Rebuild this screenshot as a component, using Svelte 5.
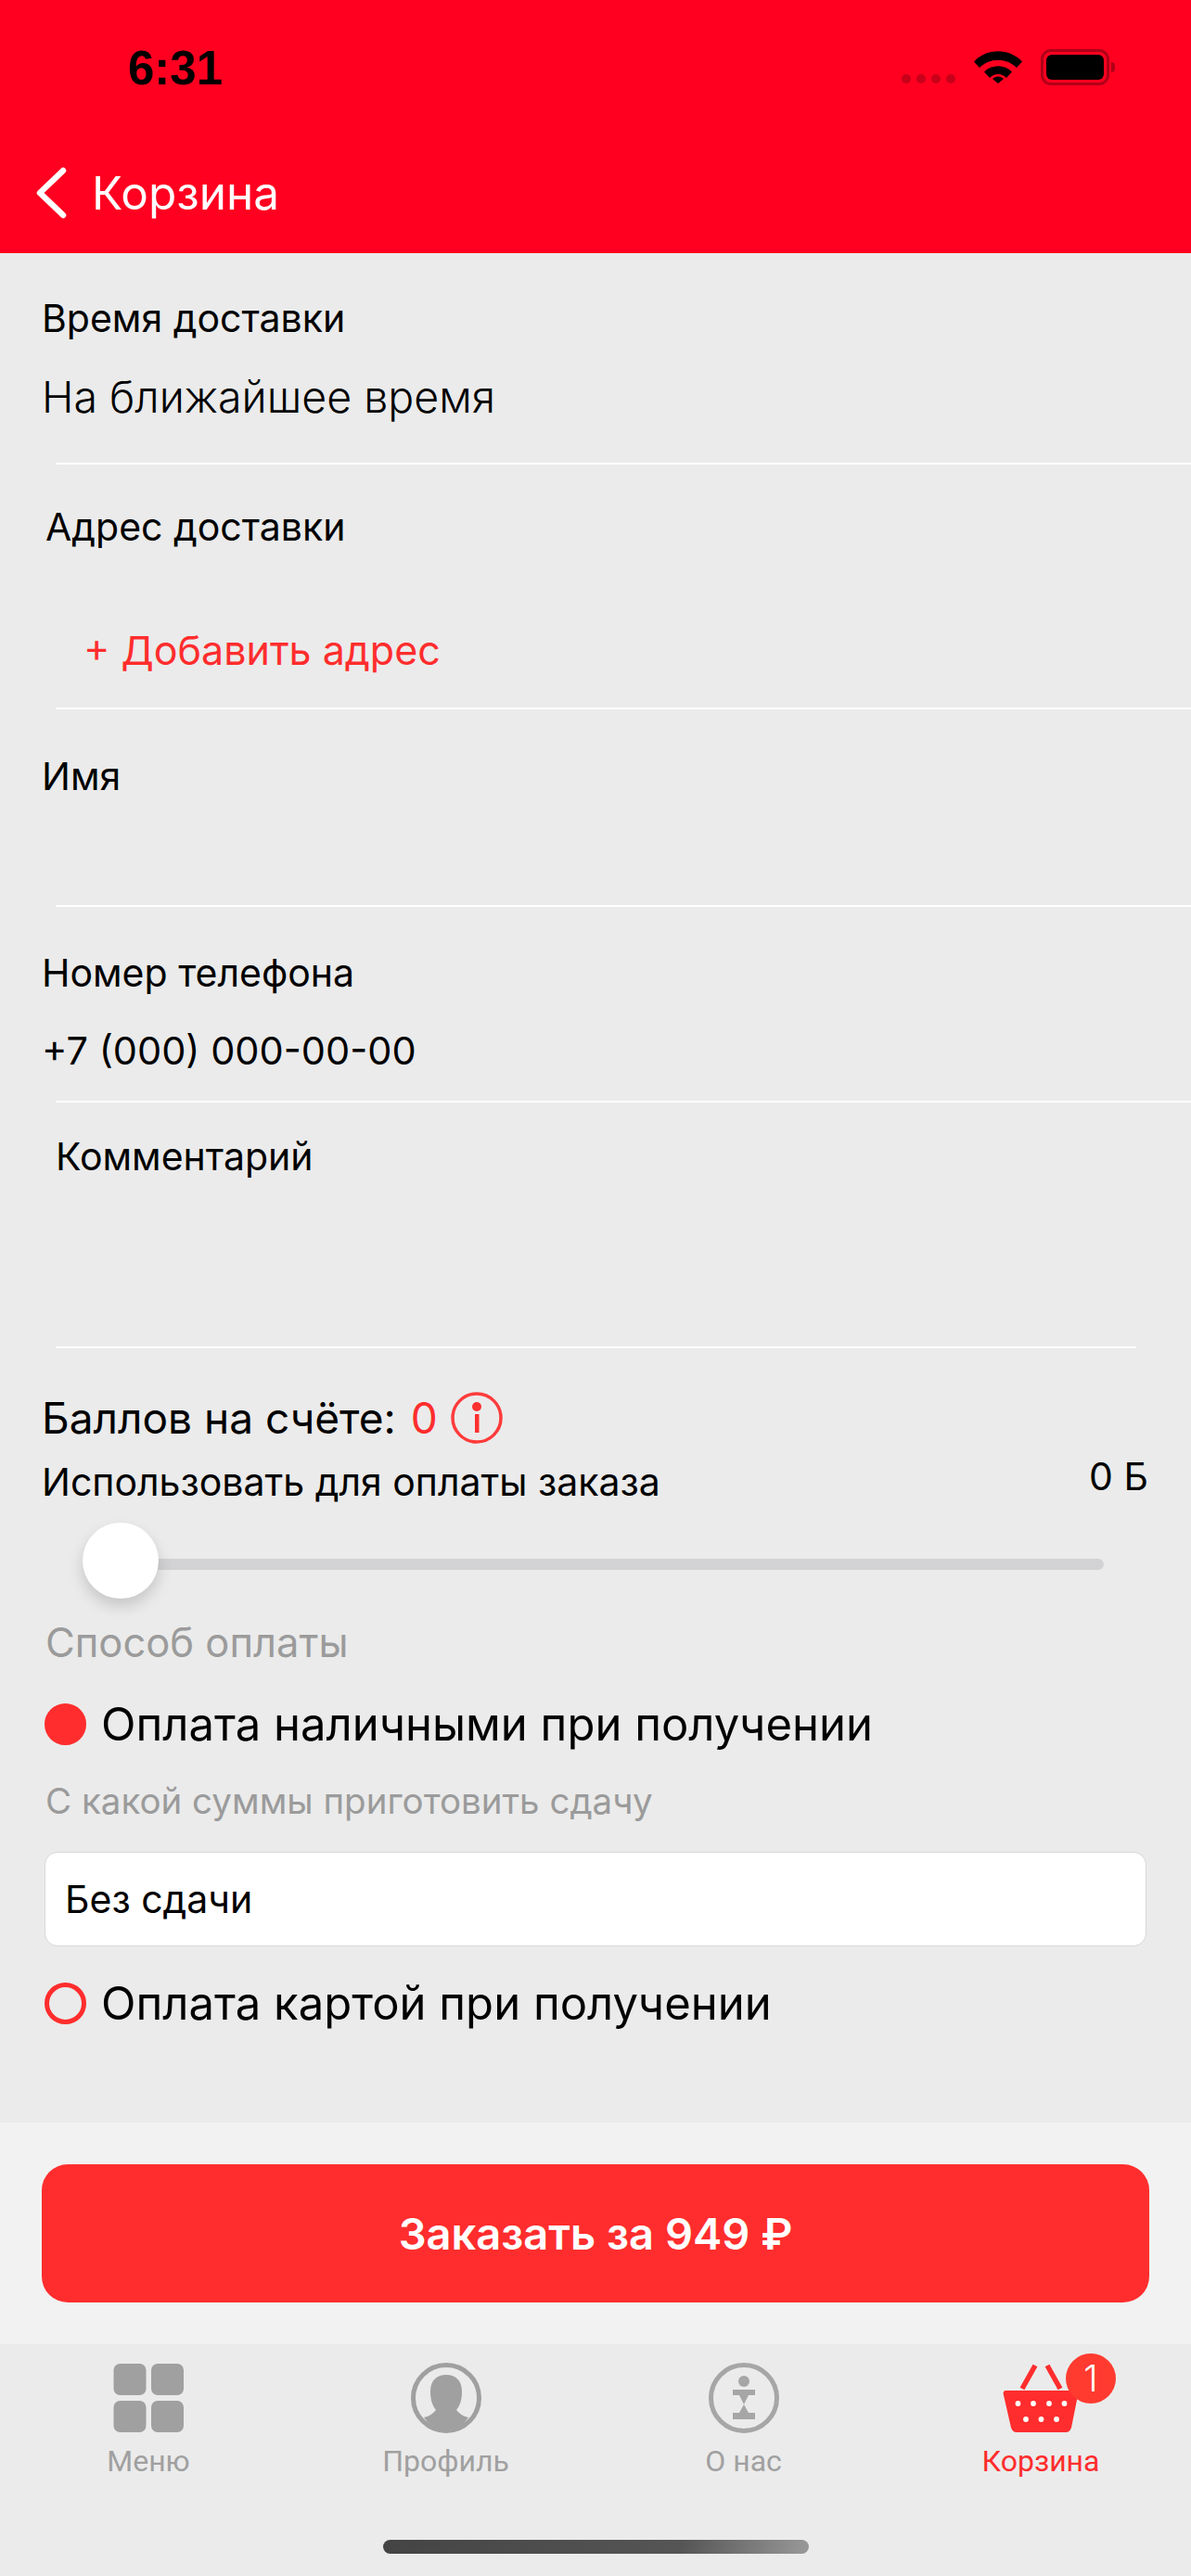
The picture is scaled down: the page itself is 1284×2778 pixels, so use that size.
<script>
  const tabs = [
    { id: 'menu', label: 'Меню' },
    { id: 'profile', label: 'Профиль' },
    { id: 'about', label: 'О нас' },
    { id: 'cart', label: 'Корзина', active: true, badge: 1 }
  ];
</script>

<div class="screen">
  <header class="top">
    <div class="status">
      <span class="time">6:31</span>
      <div class="status-icons">
        <div class="signal"><i></i><i></i><i></i><i></i></div>
        <svg class="wifi" width="52" height="38" viewBox="0 0 52 38">
          <path d="M0 13.5C14-1.5 38-1.500 52 13.500L46 20C35 9 17 9 6 20Z" />
          <path d="M11 24.500C19 16 33 16 41 24.500L35 31C30 25.500 22 25.500 17 31Z" />
          <path d="M20 33C23 29.500 29 29.500 32 33L26 38Z" transform="translate(0 -1)" />
        </svg>
        <div class="battery"><div class="battery-fill"></div></div>
        <div class="battery-cap"></div>
      </div>
    </div>
    <div class="nav">
      <svg class="back" width="36" height="56" viewBox="0 0 36 56">
        <path d="M31 4L6 28L31 52" fill="none" stroke="#fff" stroke-width="6.500" stroke-linecap="round" stroke-linejoin="round" />
      </svg>
      <span class="nav-title">Корзина</span>
    </div>
  </header>

  <main class="form">
    <section class="field time-field">
      <div class="label">Время доставки</div>
      <div class="value">На ближайшее время</div>
    </section>
    <section class="field address-field">
      <div class="label">Адрес доставки</div>
      <div class="add">+ Добавить адрес</div>
    </section>
    <section class="field name-field">
      <div class="label">Имя</div>
    </section>
    <section class="field phone-field">
      <div class="label">Номер телефона</div>
      <div class="phone">+7 (000) 000-00-00</div>
    </section>
    <section class="field comment-field">
      <div class="label">Комментарий</div>
    </section>

    <section class="points">
      <div class="points-line">
        <span>Баллов на счёте:</span>
        <span class="points-value">0</span>
        <svg width="56" height="56" viewBox="0 0 56 56">
          <circle cx="28" cy="28" r="26" fill="none" stroke="#ff3b3b" stroke-width="3.500" />
          <circle cx="28" cy="16" r="5" fill="#ff3030" />
          <rect x="26" y="24" width="4.500" height="20" fill="#ff3030" />
        </svg>
      </div>
      <div class="use-line">
        <span class="use-label">Использовать для оплаты заказа</span>
        <span class="use-value">0 Б</span>
      </div>
      <div class="slider">
        <div class="track"></div>
        <div class="thumb"></div>
      </div>
    </section>

    <section class="payment">
      <div class="muted pay-title">Способ оплаты</div>
      <div class="radio-row">
        <span class="radio on"></span>
        <span>Оплата наличными при получении</span>
      </div>
      <div class="muted change-title">С какой суммы приготовить сдачу</div>
      <div class="input">Без сдачи</div>
      <div class="radio-row second">
        <span class="radio"></span>
        <span>Оплата картой при получении</span>
      </div>
    </section>
  </main>

  <div class="order-bar">
    <button class="order">Заказать за 949 ₽</button>
  </div>

  <nav class="tabs">
    {#each tabs as tab}
      <div class="tab" class:active={tab.active}>
        <div class="tab-icon">
          {#if tab.id === 'menu'}
            <svg width="76" height="76" viewBox="0 0 76 76" fill="#a0a0a0">
              <rect x="0.500" y="1" width="35" height="34" rx="7" />
              <rect x="41" y="1" width="35" height="34" rx="7" />
              <rect x="0.500" y="41" width="35" height="34" rx="7" />
              <rect x="41" y="41" width="35" height="34" rx="7" />
            </svg>
          {:else if tab.id === 'profile'}
            <svg width="76" height="76" viewBox="0 0 76 76">
              <circle cx="38" cy="38" r="35.500" fill="none" stroke="#a0a0a0" stroke-width="5" />
              <path fill="#a0a0a0" d="M38 13C47 13 55 18 55 31C55 40 53 46 49 51C52 55 57 58 62 59C55 69 47 75 38 75C29 75 21 69 14 59C19 58 24 55 27 51C23 46 21 40 21 31C21 18 29 13 38 13Z" />
            </svg>
          {:else if tab.id === 'about'}
            <svg width="76" height="76" viewBox="0 0 76 76">
              <circle cx="38" cy="38" r="35.500" fill="none" stroke="#a6a6a6" stroke-width="5" />
              <circle cx="38" cy="20" r="6" fill="#a6a6a6" />
              <path fill="#a6a6a6" d="M26 29H50V35H43L38 45L43 54H50V61H26V54H33L38 45L33 35H26Z" />
            </svg>
          {:else}
            <svg width="86" height="76" viewBox="0 0 86 76">
              <path d="M37 3L23 28M50 3L64 28" stroke="#ff2d2d" stroke-width="5.500" fill="none" />
              <path fill="#ff2d2d" d="M6 30H80C83 30 84 32 83 35L76 70C75 73 73 75 70 75H17C14 75 12 73 11 70L3 35C2 32 3 30 6 30Z" />
              <g fill="#fff">
                <circle cx="18.500" cy="44" r="2.900" /><circle cx="35" cy="44" r="2.900" />
                <circle cx="52" cy="44" r="2.900" /><circle cx="68.500" cy="44" r="2.900" />
                <circle cx="27" cy="61" r="2.900" /><circle cx="43.500" cy="61" r="2.900" />
                <circle cx="60" cy="61" r="2.900" />
              </g>
            </svg>
          {/if}
          {#if tab.badge}
            <span class="badge">{tab.badge}</span>
          {/if}
        </div>
        <span class="tab-label">{tab.label}</span>
      </div>
    {/each}
    <div class="home-indicator"></div>
  </nav>
</div>

<style>
  :global(body) {
    margin: 0;
    background: #ebebeb;
  }

  .screen {
    width: 1284px;
    height: 2778px;
    display: flex;
    flex-direction: column;
    background: #ebebeb;
    color: #000;
    font-family: Inter, "Noto Sans", sans-serif;
    overflow: hidden;
  }

  .top {
    height: 273px;
    background: #ff0020;
    box-sizing: border-box;
  }

  .status {
    height: 174px;
    display: flex;
    justify-content: space-between;
    align-items: flex-start;
  }

  .time {
    margin: 46px 0 0 138px;
    font-family: "Liberation Sans", sans-serif;
    font-size: 51px;
    line-height: 56px;
    font-weight: 700;
  }

  .status-icons {
    display: flex;
    align-items: flex-start;
    margin: 53px 82px 0 0;
  }

  .signal {
    display: flex;
    gap: 6px;
    margin: 27px 20px 0 0;
  }

  .signal i {
    width: 10px;
    height: 10px;
    border-radius: 50%;
    background: #c8001a;
  }

  .wifi {
    margin-right: 20px;
  }

  .battery {
    width: 74px;
    height: 39px;
    box-sizing: border-box;
    border: 3px solid #b00018;
    border-radius: 11px;
    padding: 3px;
  }

  .battery-fill {
    width: 100%;
    height: 100%;
    background: #000;
    border-radius: 6px;
  }

  .battery-cap {
    width: 4px;
    height: 11px;
    margin: 14px 0 0 2px;
    background: #b00018;
    border-radius: 0 4px 4px 0;
  }

  .nav {
    display: flex;
    align-items: center;
    height: 68px;
    padding-left: 37px;
  }

  .nav-title {
    margin-left: 26px;
    color: #fff;
    font-size: 49.500px;
    line-height: 68px;
  }

  .form {
    flex: 1;
    display: flex;
    flex-direction: column;
  }

  .field {
    position: relative;
    box-sizing: border-box;
    padding-left: 45px;
    background-image: linear-gradient(#fff, #fff);
    background-repeat: no-repeat;
    background-size: calc(100% - 60px) 2px;
    background-position: 60px 100%;
  }

  .label {
    font-size: 41px;
    line-height: 48px;
  }

  .time-field {
    height: 228px;
    padding-top: 46px;
  }

  .value {
    margin-top: 36px;
    font-size: 46.500px;
    line-height: 50px;
    font-weight: 300;
  }

  .address-field {
    height: 264px;
    padding: 43px 0 0 49px;
  }

  .add {
    margin: 84px 0 0 41px;
    color: #ff2d2d;
    font-size: 43px;
    line-height: 50px;
  }

  .name-field {
    height: 213px;
    padding-top: 48px;
  }

  .phone-field {
    height: 211px;
    padding-top: 47px;
  }

  .phone {
    margin-top: 36px;
    font-size: 41.500px;
    line-height: 48px;
  }

  .comment-field {
    height: 265px;
    padding: 34px 0 0 60px;
    background-size: 1165px 2px;
  }

  .points {
    padding: 0 46px 0 45px;
  }

  .points-line {
    display: flex;
    align-items: center;
    height: 56px;
    margin-top: 47px;
    font-size: 46px;
  }

  .points-value {
    margin-left: 16px;
    color: #ff2d2d;
  }

  .points-line svg {
    margin-left: 14px;
  }

  .use-line {
    display: flex;
    justify-content: space-between;
    align-items: flex-start;
    margin-top: 12px;
    font-size: 41px;
    line-height: 46px;
  }

  .use-label {
    margin-top: 6px;
  }

  .slider {
    position: relative;
    height: 82px;
    margin-top: 21px;
  }

  .track {
    position: absolute;
    left: 60px;
    right: 48px;
    top: 39px;
    height: 12px;
    border-radius: 6px;
    background: #d2d2d4;
  }

  .thumb {
    position: absolute;
    left: 44px;
    top: 0;
    width: 82px;
    height: 82px;
    border-radius: 50%;
    background: #fff;
    box-shadow: 0 8px 16px rgba(0, 0, 0, 0.16);
  }

  .payment {
    padding: 0 48px 0 46px;
  }

  .muted {
    color: #9b9b9b;
  }

  .pay-title {
    margin: 24px 0 0 3px;
    font-size: 43.500px;
    line-height: 46px;
  }

  .radio-row {
    display: flex;
    align-items: center;
    gap: 16px;
    margin-top: 38px;
    height: 54px;
    font-size: 49px;
  }

  .radio {
    flex: none;
    width: 45px;
    height: 45px;
    margin-left: 2px;
    box-sizing: border-box;
    border: 5px solid #ff2d2d;
    border-radius: 50%;
  }

  .radio.on {
    background: #ff2d2d;
  }

  .change-title {
    margin: 34px 0 0 3px;
    font-size: 38.500px;
    line-height: 44px;
  }

  .input {
    box-sizing: border-box;
    height: 102px;
    margin: 33px 0 0 2px;
    padding-left: 21px;
    border: 1px solid #d8d8d8;
    border-radius: 14px;
    background: #fff;
    font-size: 41px;
    line-height: 100px;
  }

  .radio-row.second {
    margin-top: 34px;
  }

  .order-bar {
    box-sizing: border-box;
    height: 239px;
    padding: 45px;
    background: #f2f2f2;
  }

  .order {
    display: block;
    width: 100%;
    height: 149px;
    border: 0;
    border-radius: 28px;
    background: #ff2d2d;
    color: #fff;
    font-family: inherit;
    font-size: 47px;
    font-weight: 600;
  }

  .tabs {
    position: relative;
    flex: none;
    height: 250px;
    display: grid;
    grid-template-columns: 320px 321px 321px 320px;
    background: #ebebeb;
  }

  .tab {
    display: flex;
    flex-direction: column;
    align-items: center;
    padding-top: 20px;
    color: #a0a0a0;
  }

  .tab-icon {
    position: relative;
    height: 76px;
    display: flex;
  }

  .tab-label {
    margin-top: 12px;
    font-size: 32px;
    line-height: 36px;
    font-family: Roboto, sans-serif;
  }

  .active {
    color: #ff2d2d;
  }

  .badge {
    position: absolute;
    top: -10px;
    left: 70px;
    width: 54px;
    height: 54px;
    border-radius: 50%;
    background: #ff3b30;
    color: #fff;
    font-size: 39px;
    font-weight: 300;
    line-height: 54px;
    text-align: center;
  }

  .home-indicator {
    position: absolute;
    left: 413px;
    bottom: 24px;
    width: 459px;
    height: 15px;
    border-radius: 8px;
    background: linear-gradient(100deg, #444 0%, #555 70%, #999 100%);
  }
</style>
